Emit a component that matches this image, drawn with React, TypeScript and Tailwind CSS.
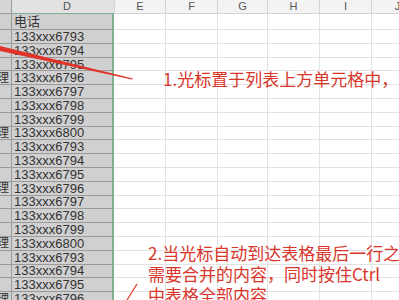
import React from 'react';

const cols = [
  { key: 'E', w: 'w-[51px]' },
  { key: 'F', w: 'w-[52px]' },
  { key: 'G', w: 'w-[50px]' },
  { key: 'H', w: 'w-[52px]' },
  { key: 'I', w: 'w-[52px]' },
  { key: 'J', w: 'w-[52px]' },
];

const phones = ['6793', '6794', '6795', '6796', '6797', '6798', '6799', '6800'];

const rows: { c: string; d: string; first?: boolean }[] = [
  { c: '', d: '电话', first: true },
  ...Array.from({ length: 20 }, (_, i) => {
    const p = phones[i % 8];
    return { c: p === '6796' || p === '6800' ? '经理' : '', d: `133xxx${p}` };
  }),
];

export default function App() {
  return (
    <div className="relative h-[300px] w-[399px] overflow-hidden bg-white font-['Liberation_Sans','Noto_Sans_CJK_SC',sans-serif]">
      {/* column headers */}
      <div className="flex h-[14px] text-[11px] text-[#555]">
        <div className="w-[12px] shrink-0 border-b border-r border-[#9e9e9e] bg-[#d6d6d6]" />
        <div className="flex w-[102px] shrink-0 items-center justify-center border-b border-[#7fb08f] bg-[#e2e2e2] pl-[8px]">D</div>
        {cols.map((col) => (
          <div key={col.key} className={`${col.w} flex shrink-0 items-center justify-center border-b border-l border-[#d4d4d4] bg-[#f3f3f3]`}>
            {col.key}
          </div>
        ))}
      </div>

      {rows.map((row, i) => (
        <div key={i} className={`flex ${row.first ? 'h-[16px]' : 'h-[13.8px]'}`}>
          <div className="flex w-[12px] shrink-0 items-center justify-end overflow-hidden whitespace-nowrap border-b border-r border-[#9a9a9a] bg-[#d0d0d0] pr-[2px] text-[12px] text-[#333]">
            {row.c}
          </div>
          <div className="flex w-[102px] shrink-0 items-center border-b border-r-2 border-b-[#9a9a9a] border-r-[#7fb08f] bg-[#d0d0d0] pl-[2px] text-[13px] leading-none text-[#333]">
            {row.d}
          </div>
          {cols.map((col, j) => (
            <div key={col.key} className={`${col.w} shrink-0 border-b ${j > 0 ? 'border-l' : ''} border-[#e2e2e2]`} />
          ))}
        </div>
      ))}

      {/* annotation strokes */}
      <svg className="absolute left-0 top-0" width="399" height="300" viewBox="0 0 399 300">
        <polygon points="0,46 0,51 132,79.5 133,78.5" fill="#e0342b" />
        <path d="M127 300 L137 284" stroke="#e0342b" strokeWidth="1.2" fill="none" />
      </svg>

      <div className="absolute left-[163px] top-[68px] whitespace-nowrap font-['Noto_Sans_CJK_SC',sans-serif] text-[17px] leading-[22px] text-[#d9362b]">
        1.光标置于列表上方单元格中，
      </div>

      <div className="absolute left-[148px] top-[242px] whitespace-nowrap font-['Noto_Sans_CJK_SC',sans-serif] text-[17px] leading-[21px] text-[#d9362b]">
        <div>2.当光标自动到达表格最后一行之</div>
        <div>需要合并的内容，同时按住Ctrl</div>
        <div>中表格全部内容</div>
      </div>
    </div>
  );
}
